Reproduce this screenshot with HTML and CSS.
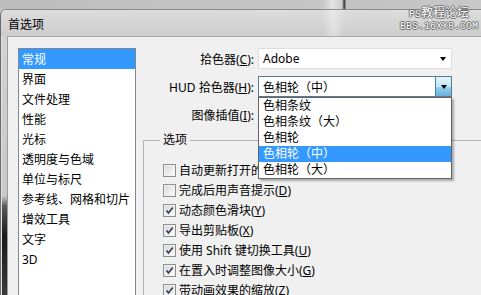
FILE: index.html
```html
<!DOCTYPE html>
<html lang="zh-CN">
<head>
  <meta charset="UTF-8">
  <title>首选项</title>
  <link rel="stylesheet" href="styles.css">
</head>
<body>
  <div class="desk"></div>
  <div class="window">
    <div class="titlebar">首选项</div>
    <div class="frame">
      <div class="frame-edge"></div>
      <div class="client">
        <ul class="categories">
          <li class="selected">常规</li>
          <li>界面</li>
          <li>文件处理</li>
          <li>性能</li>
          <li>光标</li>
          <li>透明度与色域</li>
          <li>单位与标尺</li>
          <li>参考线、网格和切片</li>
          <li>增效工具</li>
          <li>文字</li>
          <li>3D</li>
        </ul>
        <div class="general">
          <div class="field">
            <span class="label">拾色器(<u>C</u>):</span>
            <div class="combo plain"><span>Adobe</span><i class="arrow"></i></div>
          </div>
          <div class="field">
            <span class="label">HUD 拾色器(<u>H</u>):</span>
            <div class="combo focused">
              <span>色相轮（中）</span>
              <span class="drop-btn"><i class="arrow"></i></span>
              <ul class="dropdown">
                <li>色相条纹</li>
                <li>色相条纹（大）</li>
                <li>色相轮</li>
                <li class="selected">色相轮（中）</li>
                <li>色相轮（大）</li>
              </ul>
            </div>
          </div>
          <div class="field">
            <span class="label">图像插值(<u>I</u>):</span>
            <div class="combo plain"><span>两次立方（自动）</span><i class="arrow"></i></div>
          </div>
          <fieldset class="options">
            <legend>选项</legend>
            <label class="check"><span class="box"></span>自动更新打开的文档(<u>A</u>)</label>
            <label class="check"><span class="box"></span>完成后用声音提示(<u>D</u>)</label>
            <label class="check"><span class="box checked"></span>动态颜色滑块(<u>Y</u>)</label>
            <label class="check"><span class="box checked"></span>导出剪贴板(<u>X</u>)</label>
            <label class="check"><span class="box checked"></span>使用 Shift 键切换工具(<u>U</u>)</label>
            <label class="check"><span class="box checked"></span>在置入时调整图像大小(<u>G</u>)</label>
            <label class="check"><span class="box checked"></span>带动画效果的缩放(<u>Z</u>)</label>
          </fieldset>
        </div>
      </div>
    </div>
  </div>
  <div class="watermark">PS<span class="cjk">教程论坛</span><br>BBS.16XX8.COM</div>
</body>
</html>
```

FILE: styles.css
```css
body {
  margin: 0;
  width: 481px;
  height: 295px;
  overflow: hidden;
  position: relative;
  background: #c4c4c4;
  font-family: "Noto Sans", "Noto Sans CJK SC", sans-serif;
  font-size: 12px;
  color: #000;
}
ul {
  margin: 0;
  padding: 0;
  list-style: none;
}
u {
  text-decoration: underline;
}
.desk {
  height: 9px;
  background: linear-gradient(to right, #bdbdbd 0, #c6c6c6 322px, #e4e4e4 332px, #cfcfcf 342px, #4a4a4a 344px, #4a4a4a 345px, #c2c2c2 346px, #c8c8c8 100%);
}
.window {
  height: 286px;
  border-left: 1px solid #6c6c6c;
  border-top: 1px solid #8a8a8a;
  border-top-left-radius: 6px;
  background: #d4d4d4;
  overflow: hidden;
}
.titlebar {
  height: 24px;
  padding: 2px 0 0 7px;
  line-height: 25px;
  background:
    linear-gradient(to right, transparent 322px, rgba(255,255,255,.35) 332px, transparent 344px),
    linear-gradient(#dcdcdc, #cdcdcd);
}
.frame {
  display: flex;
  height: 259px;
}
.frame-edge {
  width: 6px;
  background: linear-gradient(#d2d2d2 0, #c8c8c8 160px, #5a5a5a 170px, #1a1a1a 200px, #3a3a3a 259px);
  box-shadow: inset 1px 0 0 #e0e0e0;
}
.client {
  flex: 1;
  display: flex;
  border-left: 1px solid #9c9c9c;
  border-top: 1px solid #a8a8a8;
  background: #f0f0f0;
  padding: 11px 0 0 10px;
}
.categories {
  width: 116px;
  height: 270px;
  border: 1px solid #828790;
  background: #fff;
  flex-shrink: 0;
}
.categories li {
  height: 20px;
  line-height: 21px;
  padding-left: 3px;
}
.categories .selected {
  background: #3399ff;
  color: #fff;
}
.general {
  flex: 1;
  margin-left: 7px;
  display: flex;
  flex-direction: column;
  gap: 7px;
}
.field {
  display: flex;
  align-items: center;
  height: 21px;
}
.label {
  width: 111px;
  text-align: right;
  margin-right: 4px;
  white-space: nowrap;
}
.combo {
  position: relative;
  width: 194px;
  height: 21px;
  box-sizing: border-box;
  display: flex;
  align-items: center;
  padding-left: 4px;
  background: #fff;
}
.combo.plain {
  border: 1px solid #dedede;
}
.combo.focused {
  border: 1px solid #5d7891;
  z-index: 2;
}
.arrow {
  width: 0;
  height: 0;
  border-top: 4px solid #000;
  border-left: 3.5px solid transparent;
  border-right: 3.5px solid transparent;
}
.combo.plain .arrow {
  position: absolute;
  right: 5px;
  top: 8px;
}
.drop-btn {
  position: absolute;
  right: 0;
  top: 0;
  bottom: 0;
  width: 15px;
  border-left: 1px solid #3c7fb1;
  background: linear-gradient(#e5f4fc, #c4e5f6 50%, #98d1ef 51%, #68b3db);
  display: flex;
  align-items: center;
  justify-content: center;
}
.dropdown {
  position: absolute;
  top: 20px;
  left: -1px;
  width: 194px;
  box-sizing: border-box;
  border: 1px solid #646464;
  background: #fff;
  box-shadow: 2px 2px 2px rgba(0, 0, 0, .3);
}
.dropdown li {
  height: 16px;
  line-height: 16px;
  padding-left: 4px;
}
.dropdown .selected {
  background: #3399ff;
  color: #fff;
}
.options {
  margin: 0 -20px 0 0;
  padding: 12px 0 0 19px;
  border: 1px solid #b4b4b4;
  border-bottom: none;
}
.options legend {
  padding: 0 3px;
  margin-left: -3px;
  line-height: 16px;
}
.check {
  display: flex;
  align-items: center;
  height: 20px;
  white-space: nowrap;
}
.box {
  width: 13px;
  height: 13px;
  box-sizing: border-box;
  margin-right: 3px;
  border: 1px solid #8e8f8f;
  background: linear-gradient(135deg, #d4d4d4, #f7f7f7 80%);
  box-shadow: inset 0 0 0 1px #f2f2f2;
}
.box.checked {
  background:
    url("data:image/svg+xml,%3Csvg xmlns='http://www.w3.org/2000/svg' width='11' height='11'%3E%3Cpath d='M2.5 5.5 L4.5 8 L8.8 2.5' fill='none' stroke='%23323e5c' stroke-width='1.7'/%3E%3C/svg%3E") center no-repeat,
    linear-gradient(135deg, #d4d4d4, #f7f7f7 80%);
}
.watermark {
  position: absolute;
  top: 6px;
  right: 3px;
  font-family: "Liberation Mono", "Noto Sans CJK SC", monospace;
  font-size: 10px;
  line-height: 12px;
  text-align: center;
  color: #fff;
  text-shadow: 1px 0 0 #6a6a6a, -1px 0 0 #6a6a6a, 0 1px 0 #6a6a6a, 0 -1px 0 #6a6a6a;
}
.watermark .cjk {
  font-family: "Noto Sans CJK SC", sans-serif;
  font-size: 12px;
}
```
